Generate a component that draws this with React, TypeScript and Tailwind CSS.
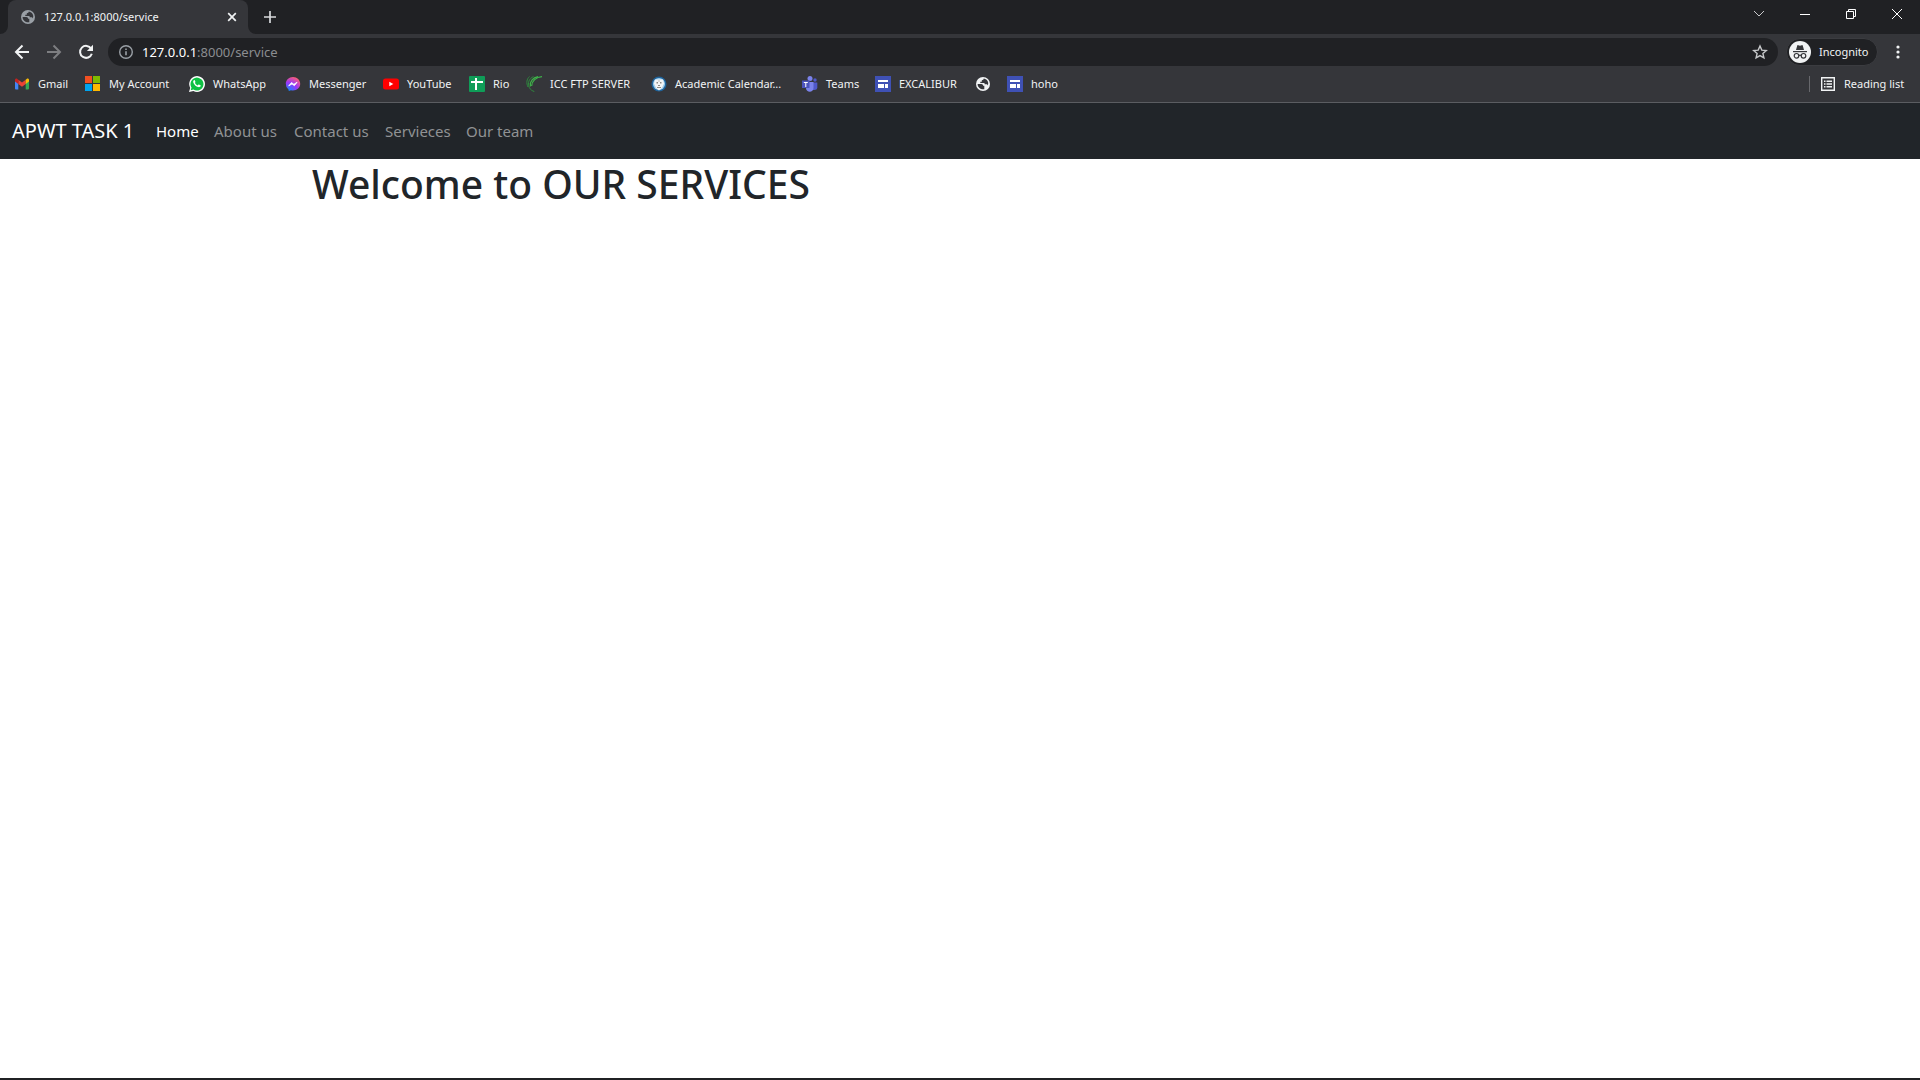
import React from "react";

type IconProps = { className?: string };

const Globe = ({ className = "" }: IconProps) => (
  <svg viewBox="0 0 16 16" className={`size-4 shrink-0 ${className}`} aria-hidden="true">
    <circle cx="8" cy="8" r="7" fill="currentColor" />
    <path
      d="M2.600 8h3.600c1.300 0 1.900.7 1.900 1.800h1.200v3.500c-3.700.5-6.600-1.800-6.700-5.300zM8.800 2.600c-.2 1.200-.8 1.600-2 1.600v1.500H5.300v1.200h3.400c.8 0 1 .5 1 1.300h1.600c.9 0 1.300.5 1.500 1.200 1.300-2.800-.2-6-4-6.800z"
      fill="#35363a"
    />
  </svg>
);

const Gmail = () => (
  <svg viewBox="0 0 16 16" className="size-4 shrink-0" aria-hidden="true">
    <path d="M1 4v8.600c0 .5.400.900.900.900h2.400V6.600L1 4z" fill="#4285f4" />
    <path d="M15 4v8.600c0 .5-.4.900-.9.900h-2.400V6.600L15 4z" fill="#34a853" />
    <path d="M4.300 3.700 8 6.500l3.700-2.800v4.200L8 10.700 4.300 7.900z" fill="#ea4335" />
    <path d="M11.700 3.700l1-.8c1-.7 2.300-.1 2.300 1.100v1.500l-3.300 2.500z" fill="#fbbc04" />
    <path d="M4.300 3.700l-1-.8C2.300 2.200 1 2.800 1 4v1.500L4.300 8z" fill="#c5221f" />
  </svg>
);

const Microsoft = () => (
  <svg viewBox="0 0 16 16" className="size-4 shrink-0" aria-hidden="true">
    <path d="M0 0h7v7H0z" fill="#f25022" />
    <path d="M8 0h7v7H8z" fill="#7fba00" />
    <path d="M0 8h7v7H0z" fill="#00a4ef" />
    <path d="M8 8h7v7H8z" fill="#ffb900" />
  </svg>
);

const WhatsApp = () => (
  <svg viewBox="0 0 16 16" className="size-4 shrink-0" aria-hidden="true">
    <path d="M0 16l1.200-4.100A7.900 7.900 0 1 1 4.400 15z" fill="#fff" />
    <path d="M1.700 14.300l.8-2.700A6.500 6.500 0 1 1 4.500 13.600z" fill="#0fc144" />
    <path
      d="M5.800 4.400c-.2-.4-.7-.4-1-.1-.8.800-.8 1.800-.2 2.900 1 1.900 2.500 3.200 4.400 3.900 1.200.4 2.400-.1 2.700-1 .2-.7.1-.7-.3-.9l-1.400-.7c-.3-.1-.5 0-.7.300-.6.700-.6.700-1.200.5A5 5 0 0 1 6 7c-.2-.4.400-.7.500-1.100z"
      fill="#fff"
    />
  </svg>
);

const Messenger = () => (
  <svg viewBox="0 0 16 16" className="size-4 shrink-0" aria-hidden="true">
    <defs>
      <radialGradient id="messenger-fill" cx="0.2" cy="1" r="1.100">
        <stop offset="0" stopColor="#0a8cff" />
        <stop offset="0.55" stopColor="#9a35fb" />
        <stop offset="1" stopColor="#ff5f70" />
      </radialGradient>
    </defs>
    <path
      d="M8 1c4.100 0 7.200 3 7.200 6.800 0 3.900-3.100 6.700-7.200 6.700-.7 0-1.400-.1-2-.3l-2.200.9-.3-1.700A6.600 6.600 0 0 1 .8 7.800C.8 4 3.900 1 8 1z"
      fill="url(#messenger-fill)"
    />
    <path d="M3.700 9.900 6.500 6.500l2.400 1.800 3.200-2.100-2.700 3.500L7 7.900z" fill="#fff" stroke="#fff" strokeWidth=".8" strokeLinejoin="round" />
  </svg>
);

const YouTube = () => (
  <svg viewBox="0 0 16 16" className="size-4 shrink-0" aria-hidden="true">
    <rect x="0" y="2.500" width="16" height="11" rx="2.500" fill="#f00" />
    <path d="M6.300 5.700v4.600l4-2.300z" fill="#fff" />
  </svg>
);

const Sheets = () => (
  <svg viewBox="0 0 16 16" className="size-4 shrink-0" aria-hidden="true">
    <rect width="16" height="16" rx="1" fill="#0f9d58" />
    <path d="M2 5h12v2H8v7H6V7H2zM6 2h2v3H6z" fill="#fff" />
  </svg>
);

const Ftp = () => (
  <svg viewBox="0 0 16 16" className="size-4 shrink-0" fill="none" stroke="#3fb54a" aria-hidden="true">
    <path d="M16 .6C10 1 5.800 5 5.600 10" strokeWidth="1.200" />
    <path d="M12 .6C7 1.500 3.300 5.500 4.300 10.500" strokeWidth="1.200" />
    <path d="M7.500.6C3 2.500 1.200 7 3.300 11.500c1 2 3 3.500 5 4" stroke="#2f8a3e" />
    <path d="M3.500.6C.6 3 .1 7 2 11" stroke="#2f8a3e" />
  </svg>
);

const Academic = () => (
  <svg viewBox="0 0 16 16" className="size-4 shrink-0" aria-hidden="true">
    <circle cx="8" cy="8" r="7.500" fill="#1f639b" />
    <circle cx="8" cy="8" r="6" fill="#9fcdeb" />
    <path d="M4 3.500h8l1 4-2 4.500-3 2.500L5 12 3 7.500z" fill="#f3f5f5" />
    <path d="M5.500 6h1.500v1.500H5.500zM9 6h1.500v1.500H9zM7 9h2v1H7zM6 11h4v1H6zM7.500 4.500h1v1h-1z" fill="#8e8a84" />
  </svg>
);

const Teams = () => (
  <svg viewBox="0 0 16 16" className="size-4 shrink-0" aria-hidden="true">
    <circle cx="13" cy="4" r="1.700" fill="#5059c9" />
    <path d="M11 6.500h4.300v5c0 1.700-1.300 2.500-2.800 2.500H10z" fill="#5059c9" />
    <circle cx="8" cy="2.500" r="2.500" fill="#7b83eb" />
    <path d="M4 6h7.500v6c0 5-7.500 5-7.500 0z" fill="#7b83eb" />
    <path d="M0 4.500h7.500V12H0z" fill="#4b53bc" />
    <path d="M1.800 6h4v1H4.300v4h-1V7H1.800z" fill="#fff" />
  </svg>
);

const Sites = () => (
  <svg viewBox="0 0 16 16" className="size-4 shrink-0" aria-hidden="true">
    <path d="M0 0h16v16H0z" fill="#3f51b5" />
    <path d="M3 4h10v2H3zM3 8h6v4H3zM10 8h3v4h-3z" fill="#fff" />
  </svg>
);

const bookmarks = [
  { label: "Gmail", icon: <Gmail />, width: "w-[55px]" },
  { label: "My Account", icon: <Microsoft />, width: "w-[88px]" },
  { label: "WhatsApp", icon: <WhatsApp />, width: "w-[80px]" },
  { label: "Messenger", icon: <Messenger />, width: "w-[82px]" },
  { label: "YouTube", icon: <YouTube />, width: "w-[70px]" },
  { label: "Rio", icon: <Sheets />, width: "w-[41px]" },
  { label: "ICC FTP SERVER", icon: <Ftp />, width: "w-[109px]" },
  { label: "Academic Calendar...", icon: <Academic />, width: "w-[135px]" },
  { label: "Teams", icon: <Teams />, width: "w-[57px]" },
  { label: "EXCALIBUR", icon: <Sites />, width: "w-[84px]" },
  { label: "", icon: <Globe className="text-[#f1f3f4]" />, width: "w-4" },
  { label: "hoho", icon: <Sites />, width: "w-[52px]" },
];

const navLinks = [
  { label: "Home", style: "text-white w-[58px]" },
  { label: "About us", style: "text-[#909294] w-20" },
  { label: "Contact us", style: "text-[#909294] w-[91px]" },
  { label: "Servieces", style: "text-[#909294] w-[81px]" },
  { label: "Our team", style: "text-[#909294] w-[83px]" },
];

function TabStrip() {
  return (
    <div className="flex h-[34px] bg-[#202124] pl-2">
      <div className="relative flex w-60 items-center rounded-t-lg bg-[#35363a] pl-3 pr-2">
        <svg viewBox="0 0 8 8" className="absolute -left-2 bottom-0 size-2" aria-hidden="true">
          <path d="M8 0v8H0a8 8 0 0 0 8-8z" fill="#35363a" />
        </svg>
        <svg viewBox="0 0 8 8" className="absolute -right-2 bottom-0 size-2" aria-hidden="true">
          <path d="M0 0v8h8a8 8 0 0 1-8-8z" fill="#35363a" />
        </svg>
        <Globe className="text-[#9aa0a6]" />
        <span className="ml-2 flex-1 whitespace-nowrap text-[11px] leading-4">127.0.0.1:8000/service</span>
        <button aria-label="Close tab" className="flex size-4 items-center justify-center">
          <svg viewBox="0 0 16 16" className="size-4" stroke="#f1f3f4" strokeWidth="1.700">
            <path d="M4.200 4.200l7.600 7.600M11.800 4.200l-7.600 7.600" />
          </svg>
        </button>
      </div>
      <button aria-label="New tab" className="ml-2 flex w-7 items-center justify-center">
        <svg viewBox="0 0 14 14" className="size-3.5" stroke="#d8dadc" strokeWidth="1.700">
          <path d="M7 1v12M1 7h12" />
        </svg>
      </button>
      <div className="ml-auto flex h-7 text-white">
        <button aria-label="Search tabs" className="flex w-[46px] items-center justify-center">
          <svg viewBox="0 0 12 8" className="h-2 w-3" fill="none" stroke="#c8c9cb">
            <path d="M1 1l5 5 5-5" />
          </svg>
        </button>
        <button aria-label="Minimize" className="flex w-[46px] items-center justify-center">
          <svg viewBox="0 0 10 10" className="size-2.5" fill="none" stroke="currentColor">
            <path d="M0 5.500h10" />
          </svg>
        </button>
        <button aria-label="Restore" className="flex w-[46px] items-center justify-center">
          <svg viewBox="0 0 10 10" className="size-2.5" fill="none" stroke="currentColor">
            <path d="M.5 2.500h7v7h-7zM2.500 2.500v-2h7v7h-2" />
          </svg>
        </button>
        <button aria-label="Close" className="flex w-[46px] items-center justify-center">
          <svg viewBox="0 0 10 10" className="size-2.5" fill="none" stroke="currentColor">
            <path d="M0 0l10 10M10 0L0 10" />
          </svg>
        </button>
      </div>
    </div>
  );
}

function Toolbar() {
  return (
    <div className="flex h-9 items-center pl-2 pr-2.5">
      <button aria-label="Back" className="flex w-7 items-center justify-center">
        <svg viewBox="0 0 16 16" className="size-4" fill="none" stroke="#f1f3f4" strokeWidth="2">
          <path d="M15 8H2.500M8.500 1.500L2 8l6.500 6.500" />
        </svg>
      </button>
      <button aria-label="Forward" className="ml-1 flex w-7 items-center justify-center">
        <svg viewBox="0 0 16 16" className="size-4" fill="none" stroke="#7d7e81" strokeWidth="2">
          <path d="M1 8h12.500M7.500 1.500L14 8l-6.500 6.500" />
        </svg>
      </button>
      <button aria-label="Reload" className="ml-1 flex w-7 items-center justify-center">
        <svg viewBox="0 0 16 16" className="size-4" fill="none" stroke="#f1f3f4" strokeWidth="2">
          <path d="M13.200 4.700A6 6 0 1 0 13.800 9.700" />
          <path d="M15 .8v6.100H8.900z" fill="#f1f3f4" stroke="none" />
        </svg>
      </button>
      <div className="ml-2 flex h-7 flex-1 items-center rounded-full bg-[#202124] pl-2.5 pr-2.5">
        <svg viewBox="0 0 16 16" className="size-4" fill="none" stroke="#9aa0a6" strokeWidth="1.400" aria-hidden="true">
          <circle cx="8" cy="8" r="6.300" />
          <path d="M8 7.200v4M8 4.500v1.500" strokeWidth="1.600" />
        </svg>
        <button aria-label="Address" className="ml-2 flex-1 text-left text-[13px] leading-5 text-[#8b8d90]">
          <span className="text-white">127.0.0.1</span>:8000/service
        </button>
        <button aria-label="Bookmark this tab">
          <svg viewBox="0 0 16 16" className="size-4" fill="none" stroke="#c6c8ca" strokeWidth="1.400">
            <path d="M8 2l1.800 4.100 4.500.4-3.400 3 1 4.400L8 11.600l-3.900 2.300 1-4.400-3.400-3 4.500-.4z" />
          </svg>
        </button>
      </div>
      <button className="ml-2 flex h-7 w-[92px] items-center rounded-full border border-[#3b3c40] bg-[#202124] pl-0.5 text-[11px] leading-4">
        <svg viewBox="0 0 22 22" className="size-[22px] shrink-0" aria-hidden="true">
          <circle cx="11" cy="11" r="11" fill="#f1f3f4" />
          <path d="M7 9l1.200-4.300c.1-.5.500-.7 1-.5L11 4.700l1.800-.5c.5-.2.900 0 1 .5L15 9z" fill="#35363a" />
          <path d="M4 10h14v1.200H4z" fill="#35363a" />
          <g fill="none" stroke="#35363a" strokeWidth="1.200">
            <circle cx="7.500" cy="14.800" r="2.300" />
            <circle cx="14.500" cy="14.800" r="2.300" />
            <path d="M9.800 14.500q1.200-.8 2.400 0" />
          </g>
        </svg>
        <span className="ml-2">Incognito</span>
      </button>
      <button aria-label="Menu" className="ml-2 flex w-6 items-center justify-center">
        <svg viewBox="0 0 4 14" className="h-3.5 w-1" fill="#f1f3f4">
          <circle cx="2" cy="2" r="1.600" />
          <circle cx="2" cy="7" r="1.600" />
          <circle cx="2" cy="12" r="1.600" />
        </svg>
      </button>
    </div>
  );
}

function BookmarksBar() {
  return (
    <div className="flex h-[33px] items-center border-b border-[#5b5d61] pl-3.5 pr-3 text-[11px] leading-4">
      <nav aria-label="Bookmarks" className="flex gap-4 pb-1">
        {bookmarks.map((b, i) => (
          <a key={i} href="#" aria-label={b.label || "Bookmark"} className={`flex shrink-0 items-center gap-2 whitespace-nowrap ${b.width}`}>
            {b.icon}
            {b.label}
          </a>
        ))}
      </nav>
      <button className="ml-auto flex items-center pb-1">
        <span className="mr-2.5 h-4 w-px bg-[#67686c]" />
        <svg viewBox="0 0 16 16" className="size-4" fill="none" stroke="#f1f3f4" aria-hidden="true">
          <path d="M1.700 1.700h12.600v12.600H1.700z" strokeWidth="1.400" />
          <path d="M4 5.200h1.500M6.500 5.200H12M4 8h1.500M6.500 8H12M4 10.800h1.500M6.500 10.800H12" strokeWidth="1.400" />
        </svg>
        <span className="ml-2 w-16 whitespace-nowrap text-left">Reading list</span>
      </button>
    </div>
  );
}

export default function App() {
  return (
    <div className="flex min-h-screen flex-col bg-white font-['Noto_Sans',sans-serif]">
      <header className="bg-[#35363a] text-[#f1f3f4]">
        <TabStrip />
        <Toolbar />
        <BookmarksBar />
      </header>
      <nav className="flex h-14 items-center bg-[#212529] pl-3">
        <a href="#" className="w-[136px] whitespace-nowrap text-xl text-white">
          APWT TASK 1
        </a>
        {navLinks.map((l) => (
          <a key={l.label} href="#" className={`px-2 whitespace-nowrap text-[15px] leading-6 ${l.style}`}>
            {l.label}
          </a>
        ))}
      </nav>
      <main className="mx-auto w-full max-w-[1320px] flex-1 px-3">
        <h1 className="text-[39px] leading-[50px] font-medium text-[#212529]">Welcome to OUR SERVICES</h1>
      </main>
      <div className="h-0.5 bg-[#202124]" />
    </div>
  );
}
